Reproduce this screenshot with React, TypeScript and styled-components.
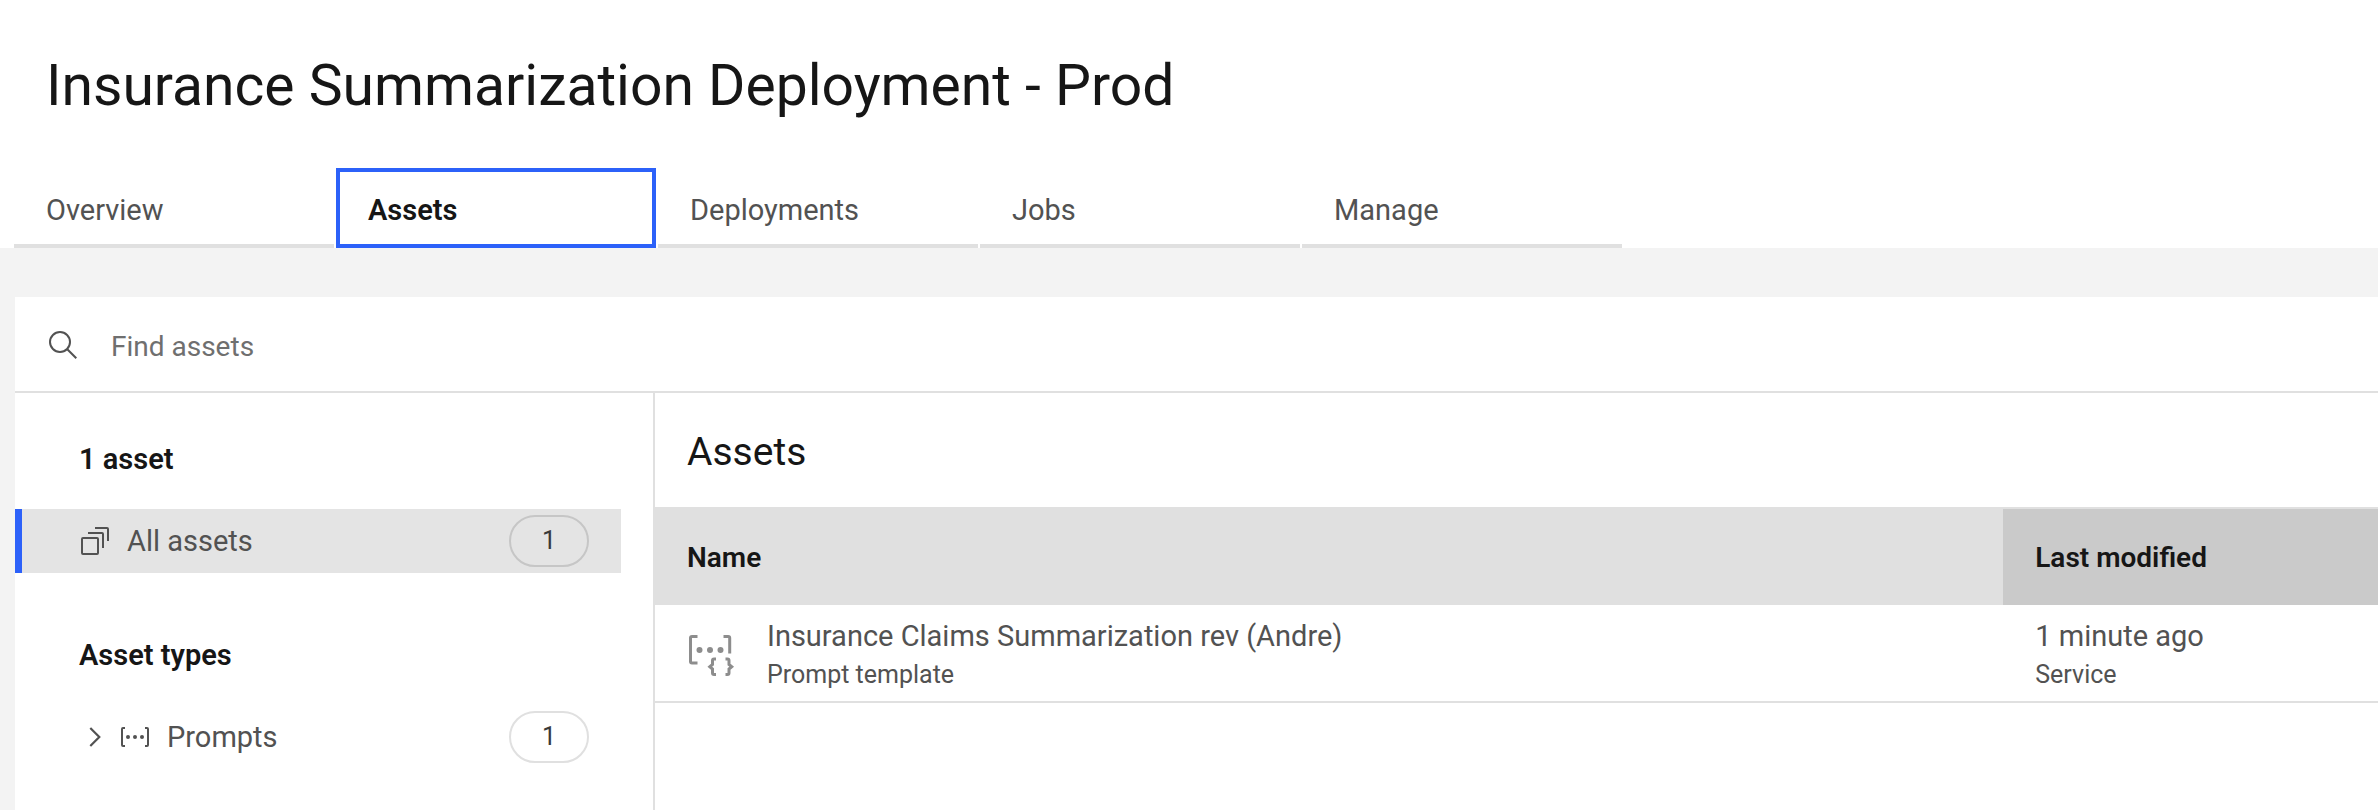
import React from "react";
import styled, { createGlobalStyle } from "styled-components";

const c = {
  text: "#161616",
  secondary: "#525252",
  placeholder: "#6f6f6f",
  line: "#e0e0e0",
  accent: "#2c61f9",
  page: "#f3f3f3",
  selected: "#e4e4e4",
  sorted: "#cacaca",
};

const GlobalStyle = createGlobalStyle`
  *, *::before, *::after { box-sizing: border-box; }
  body {
    margin: 0;
    background: ${c.page};
    color: ${c.secondary};
    font-family: Roboto, "Liberation Sans", sans-serif;
    font-size: 29px;
    line-height: 36px;
  }
  button, input { font: inherit; color: inherit; }
  h1, h2, h3, p { margin: 0; }
`;

const Page = styled.div`
  display: flex;
  flex-direction: column;
  min-height: 100vh;
`;

const Header = styled.header`
  padding: 54px 14px 0;
  background: #fff;
`;

const Title = styled.h1`
  padding-left: 32px;
  margin-bottom: 50px;
  color: ${c.text};
  font-size: 57px;
  font-weight: 400;
  line-height: 64px;
`;

const Tabs = styled.div`
  display: flex;
  gap: 2px;
`;

const Tab = styled.button<{ $active: boolean }>`
  flex: 0 1 320px;
  height: 80px;
  padding: ${(p) => (p.$active ? "4px 28px 0" : "8px 32px 0")};
  border: ${(p) => (p.$active ? `4px solid ${c.accent}` : "0")};
  border-bottom: 4px solid ${(p) => (p.$active ? c.accent : c.line)};
  background: #fff;
  color: ${(p) => (p.$active ? c.text : c.secondary)};
  font-weight: ${(p) => (p.$active ? 600 : 400)};
  text-align: left;
  cursor: pointer;
`;

const Panel = styled.main`
  display: flex;
  flex: 1;
  flex-direction: column;
  margin: 49px 0 0 15px;
  background: #fff;
`;

const Search = styled.label`
  display: flex;
  align-items: center;
  gap: 33px;
  height: 96px;
  padding: 0 31px;
  border-bottom: 2px solid ${c.line};
`;

const SearchInput = styled.input`
  flex: 1;
  min-width: 0;
  padding: 6px 0 0;
  border: 0;
  outline: 0;
  background: transparent;
  font-size: 28px;
  &::placeholder { color: ${c.placeholder}; opacity: 1; }
`;

const Columns = styled.div`
  display: grid;
  flex: 1;
  grid-template-columns: 640px minmax(0, 1fr);
`;

const Sidebar = styled.nav`
  display: flex;
  flex-direction: column;
  gap: 64px;
  padding: 48px 32px 32px 0;
  border-right: 2px solid ${c.line};
`;

const GroupTitle = styled.h3`
  padding-left: 64px;
  margin-bottom: 32px;
  color: ${c.text};
  font-size: 29px;
  font-weight: 600;
`;

const Item = styled.button<{ $selected?: boolean }>`
  display: flex;
  align-items: center;
  width: 100%;
  height: 64px;
  padding: 0 32px 0 57px;
  border: 0;
  border-left: 7px solid ${(p) => (p.$selected ? c.accent : "transparent")};
  background: ${(p) => (p.$selected ? c.selected : "transparent")};
  text-align: left;
  cursor: pointer;
`;

const ItemLabel = styled.span`
  flex: 1;
  padding-left: 16px;
`;

const Count = styled.span<{ $selected?: boolean }>`
  display: flex;
  align-items: center;
  justify-content: center;
  width: 80px;
  height: 52px;
  border: 2px solid ${(p) => (p.$selected ? "#c6c6c6" : c.line)};
  border-radius: 26px;
  color: #393939;
  font-size: 25px;
`;

const Icon = styled.svg`
  flex: none;
  fill: none;
  stroke: currentColor;
`;

const TypeIcon = styled(Icon)`
  color: #8d8d8d;
`;

const PromptIconSlot = styled.span`
  display: flex;
  padding-left: 8px;
`;

const Heading = styled.h2`
  padding: 34px 32px 30px;
  color: ${c.text};
  font-size: 39px;
  font-weight: 400;
  line-height: 50px;
`;

const Table = styled.table`
  width: 100%;
  table-layout: fixed;
  border-collapse: separate;
  border-spacing: 0;
  border-top: 2px solid ${c.line};
`;

const Th = styled.th<{ $sorted?: boolean }>`
  width: ${(p) => (p.$sorted ? "auto" : "78.25%")};
  height: 96px;
  padding: 2px 32px 0;
  background: ${(p) => (p.$sorted ? c.sorted : c.line)};
  color: ${c.text};
  font-size: 28px;
  font-weight: 600;
  text-align: left;
`;

const Td = styled.td`
  padding: 11px 32px 7px;
  border-bottom: 2px solid ${c.line};
`;

const Asset = styled.div`
  display: flex;
  align-items: center;
  gap: 32px;
`;

const Primary = styled.p`
  line-height: 40px;
`;

const Secondary = styled.p`
  font-size: 25px;
  line-height: 38px;
`;

const SearchIcon = () => (
  <Icon width="32" height="32" viewBox="0 0 32 32" strokeWidth="2" aria-hidden="true">
    <circle cx="14" cy="14" r="10" />
    <path d="M21.3 21.3 30.3 30.3" />
  </Icon>
);

const StackIcon = () => (
  <Icon width="32" height="32" viewBox="0 0 32 32" strokeWidth="2" aria-hidden="true">
    <rect x="3" y="13" width="16" height="16" rx="1" />
    <path d="M9 8H23Q24 8 24 9V23M16 3H28Q29 3 29 4V16" />
  </Icon>
);

const ChevronIcon = () => (
  <Icon width="32" height="32" viewBox="0 0 32 32" strokeWidth="2.2" aria-hidden="true">
    <path d="M11.3 7 20.3 16 11.3 25" />
  </Icon>
);

const PromptIcon = () => (
  <Icon width="32" height="32" viewBox="0 0 32 32" strokeWidth="2" aria-hidden="true">
    <path d="M6 7H4Q3 7 3 8V24Q3 25 4 25H6M26 7H28Q29 7 29 8V24Q29 25 28 25H26" />
    <g fill="currentColor" stroke="none">
      <circle cx="9" cy="16" r="2" />
      <circle cx="16" cy="16" r="2" />
      <circle cx="23" cy="16" r="2" />
    </g>
  </Icon>
);

const TemplateIcon = () => (
  <TypeIcon width="48" height="48" viewBox="0 0 48 48" strokeWidth="3" aria-hidden="true">
    <path d="M10.500 5.500H5Q3.500 5.500 3.500 7V30.500Q3.500 32 5 32H10.500M36.500 5.500H41.200Q42.700 5.500 42.700 7V22.500" />
    <path d="M29 28H27Q25.500 28 25.500 29.500V33.500L22.800 35.700L25.500 38V42Q25.500 43.500 27 43.500H29M38.500 28H40.500Q42 28 42 29.500V33.500L44.700 35.700L42 38V42Q42 43.500 40.500 43.500H38.500" />
    <g fill="currentColor" stroke="none">
      <circle cx="12.500" cy="19" r="3" />
      <circle cx="23" cy="19" r="3" />
      <circle cx="33.500" cy="19" r="3" />
    </g>
  </TypeIcon>
);

const tabs = ["Overview", "Assets", "Deployments", "Jobs", "Manage"];

export default function App() {
  const [active, setActive] = React.useState("Assets");
  return (
    <Page>
      <GlobalStyle />
      <Header>
        <Title>Insurance Summarization Deployment - Prod</Title>
        <Tabs role="tablist">
          {tabs.map((name) => (
            <Tab
              key={name}
              type="button"
              role="tab"
              aria-selected={name === active}
              $active={name === active}
              onClick={() => setActive(name)}
            >
              {name}
            </Tab>
          ))}
        </Tabs>
      </Header>
      <Panel>
        <Search>
          <SearchIcon />
          <SearchInput type="text" placeholder="Find assets" aria-label="Find assets" />
        </Search>
        <Columns>
          <Sidebar>
            <section>
              <GroupTitle>1 asset</GroupTitle>
              <Item type="button" $selected aria-current="true">
                <StackIcon />
                <ItemLabel>All assets</ItemLabel>
                <Count $selected>1</Count>
              </Item>
            </section>
            <section>
              <GroupTitle>Asset types</GroupTitle>
              <Item type="button" aria-expanded="false">
                <ChevronIcon />
                <PromptIconSlot>
                  <PromptIcon />
                </PromptIconSlot>
                <ItemLabel>Prompts</ItemLabel>
                <Count>1</Count>
              </Item>
            </section>
          </Sidebar>
          <section>
            <Heading>Assets</Heading>
            <Table>
              <thead>
                <tr>
                  <Th scope="col">Name</Th>
                  <Th scope="col" $sorted>Last modified</Th>
                </tr>
              </thead>
              <tbody>
                <tr>
                  <Td>
                    <Asset>
                      <TemplateIcon />
                      <div>
                        <Primary>Insurance Claims Summarization rev (Andre)</Primary>
                        <Secondary>Prompt template</Secondary>
                      </div>
                    </Asset>
                  </Td>
                  <Td>
                    <Primary>1 minute ago</Primary>
                    <Secondary>Service</Secondary>
                  </Td>
                </tr>
              </tbody>
            </Table>
          </section>
        </Columns>
      </Panel>
    </Page>
  );
}
